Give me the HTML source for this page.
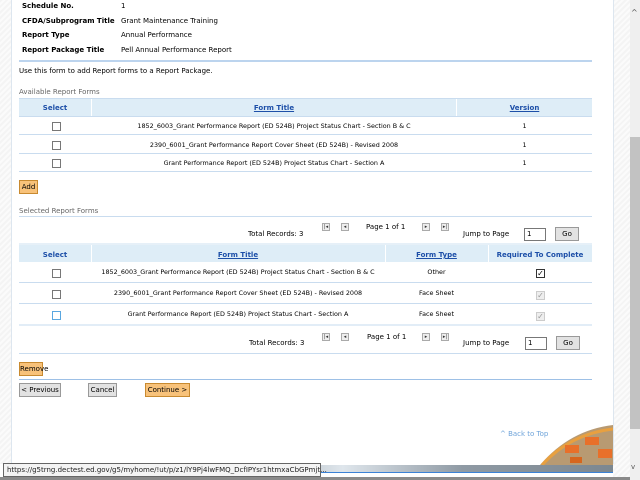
<!DOCTYPE html>
<html><head><meta charset="utf-8"><style>
*{margin:0;padding:0;box-sizing:border-box}
body{width:640px;height:480px;overflow:hidden;position:relative;background:#fff;font-family:"DejaVu Sans","Liberation Sans",sans-serif;font-size:7px;color:#000}
.a{position:absolute;white-space:nowrap;line-height:10px}
.b{font-weight:bold}
.t{font-size:6.4px}
.hatch{background:repeating-linear-gradient(135deg,#f4f4f4 0 2px,#fbfbfb 2px 4px)}
.line{position:absolute;height:1px;background:#c9dcef}
.hdr{position:absolute;background:#deedf7}
.hl{color:#1d4fa8;font-weight:bold}
.ul{text-decoration:underline}
.cb{position:absolute;width:9px;height:9px;border:1px solid #777;background:#fff}
.btn{position:absolute;border:1px solid #999;background:#e2e2e2;font-size:7px;line-height:12px;text-align:center}
.or{background:#f8c27a;border-color:#c88a30}
.pg{position:absolute;width:8px;height:8px;border:1px solid #aaa;background:#eee;font-size:5px;line-height:6px;text-align:center;color:#333}
.inp{position:absolute;border:1px solid #777;background:#fff;line-height:10px;padding-left:2px}
.c{text-align:center}
</style></head><body>
<div class="hatch" style="position:absolute;left:0;top:0;width:12px;height:464px"></div>
<div style="position:absolute;left:11px;top:0;width:1px;height:464px;background:#dde6ef"></div>
<div class="hatch" style="position:absolute;left:613px;top:0;width:17px;height:480px"></div>
<div style="position:absolute;left:613px;top:0;width:1px;height:464px;background:#dde6ef"></div>
<div style="position:absolute;left:630px;top:0;width:10px;height:480px;background:#efefef"></div>
<div style="position:absolute;left:630px;top:137px;width:10px;height:292px;background:#c2c2c2"></div>
<div class="a" style="left:631px;top:8px;font-size:8px;color:#555">^</div>
<div class="a" style="left:631px;top:462px;font-size:7px;color:#555">v</div>

<div class="a b" style="left:22px;top:1px">Schedule No.</div><div class="a" style="left:121px;top:1px">1</div>
<div class="a b" style="left:22px;top:16px">CFDA/Subprogram Title</div><div class="a" style="left:121px;top:16px">Grant Maintenance Training</div>
<div class="a b" style="left:22px;top:30px">Report Type</div><div class="a" style="left:121px;top:30px">Annual Performance</div>
<div class="a b" style="left:22px;top:45px">Report Package Title</div><div class="a" style="left:121px;top:45px">Pell Annual Performance Report</div>
<div class="line" style="left:19px;top:60px;width:573px;height:2px;background:#bcd4ee"></div>
<div class="a" style="left:19px;top:66px">Use this form to add Report forms to a Report Package.</div>
<div class="a" style="left:19px;top:87px;color:#666">Available Report Forms</div>

<div class="hdr" style="left:19px;top:98px;width:573px;height:18px;border-top:1px solid #c9dcef"></div>
<div style="position:absolute;left:91px;top:99px;width:1px;height:17px;background:#fff"></div>
<div style="position:absolute;left:456px;top:99px;width:1px;height:17px;background:#fff"></div>
<div class="a hl c" style="left:19px;top:103px;width:72px">Select</div>
<div class="a hl ul c" style="left:91px;top:103px;width:366px">Form Title</div>
<div class="a hl ul c" style="left:457px;top:103px;width:135px">Version</div>
<div class="line" style="left:19px;top:116px;width:573px"></div>
<div class="line" style="left:19px;top:134px;width:573px"></div>
<div class="line" style="left:19px;top:153px;width:573px"></div>
<div class="line" style="left:19px;top:171px;width:573px"></div>
<div class="cb" style="left:52px;top:122px"></div><div class="a c t" style="left:91px;top:121px;width:366px">1852_6003_Grant Performance Report (ED 524B) Project Status Chart - Section B &amp; C</div><div class="a c t" style="left:457px;top:121px;width:135px">1</div>
<div class="cb" style="left:52px;top:141px"></div><div class="a c t" style="left:91px;top:140px;width:366px">2390_6001_Grant Performance Report Cover Sheet (ED 524B) - Revised 2008</div><div class="a c t" style="left:457px;top:140px;width:135px">1</div>
<div class="cb" style="left:52px;top:159px"></div><div class="a c t" style="left:91px;top:158px;width:366px">Grant Performance Report (ED 524B) Project Status Chart - Section A</div><div class="a c t" style="left:457px;top:158px;width:135px">1</div>
<div class="btn or" style="left:19px;top:180px;width:19px;height:14px">Add</div>

<div class="a" style="left:19px;top:206px;color:#666">Selected Report Forms</div>
<div class="line" style="left:19px;top:216px;width:573px"></div>
<div class="a" style="left:248px;top:229px">Total Records: 3</div>
<div class="pg" style="left:322px;top:223px">|◂</div><div class="pg" style="left:341px;top:223px">◂</div>
<div class="a" style="left:366px;top:222px">Page 1 of 1</div>
<div class="pg" style="left:422px;top:223px">▸</div><div class="pg" style="left:441px;top:223px">▸|</div>
<div class="a" style="left:463px;top:229px">Jump to Page</div>
<div class="inp" style="left:524px;top:228px;width:22px;height:13px">1</div>
<div class="btn" style="left:555px;top:227px;width:24px;height:14px">Go</div>

<div class="hdr" style="left:19px;top:243px;width:573px;height:19px;border-top:2px solid #e6f0f8"></div>
<div style="position:absolute;left:91px;top:245px;width:1px;height:17px;background:#fff"></div>
<div style="position:absolute;left:385px;top:245px;width:1px;height:17px;background:#fff"></div>
<div style="position:absolute;left:488px;top:245px;width:1px;height:17px;background:#fff"></div>
<div class="a hl c" style="left:19px;top:250px;width:72px">Select</div>
<div class="a hl ul c" style="left:91px;top:250px;width:294px">Form Title</div>
<div class="a hl ul c" style="left:385px;top:250px;width:103px">Form Type</div>
<div class="a hl c" style="left:488px;top:250px;width:104px">Required To Complete</div>
<div class="line" style="left:19px;top:282px;width:573px"></div>
<div class="line" style="left:19px;top:303px;width:573px"></div>
<div class="line" style="left:19px;top:324px;width:573px;height:2px;background:#e2edf7"></div>
<div class="cb" style="left:52px;top:269px"></div><div class="a c t" style="left:91px;top:267px;width:294px">1852_6003_Grant Performance Report (ED 524B) Project Status Chart - Section B &amp; C</div><div class="a c t" style="left:385px;top:267px;width:103px">Other</div>
<div class="cb" style="left:536px;top:269px;font-size:8px;line-height:7px;text-align:center;border-color:#333">✓</div>
<div class="cb" style="left:52px;top:290px"></div><div class="a c t" style="left:91px;top:288px;width:294px">2390_6001_Grant Performance Report Cover Sheet (ED 524B) - Revised 2008</div><div class="a c t" style="left:385px;top:288px;width:103px">Face Sheet</div>
<div class="cb" style="left:536px;top:291px;font-size:8px;line-height:7px;text-align:center;border-color:#ccc;background:#eee;color:#999">✓</div>
<div class="cb" style="left:52px;top:311px;border-color:#5aa7e0"></div><div class="a c t" style="left:91px;top:309px;width:294px">Grant Performance Report (ED 524B) Project Status Chart - Section A</div><div class="a c t" style="left:385px;top:309px;width:103px">Face Sheet</div>
<div class="cb" style="left:536px;top:312px;font-size:8px;line-height:7px;text-align:center;border-color:#ccc;background:#eee;color:#999">✓</div>

<div class="a" style="left:249px;top:338px">Total Records: 3</div>
<div class="pg" style="left:322px;top:333px">|◂</div><div class="pg" style="left:341px;top:333px">◂</div>
<div class="a" style="left:367px;top:332px">Page 1 of 1</div>
<div class="pg" style="left:422px;top:333px">▸</div><div class="pg" style="left:441px;top:333px">▸|</div>
<div class="a" style="left:463px;top:338px">Jump to Page</div>
<div class="inp" style="left:525px;top:337px;width:22px;height:13px">1</div>
<div class="btn" style="left:556px;top:336px;width:24px;height:14px">Go</div>
<div class="line" style="left:19px;top:353px;width:573px"></div>
<div class="btn or" style="left:19px;top:362px;width:24px;height:14px">Remove</div>
<div class="line" style="left:19px;top:379px;width:573px;background:#9dc0e6"></div>
<div class="btn" style="left:19px;top:383px;width:42px;height:14px">&lt; Previous</div>
<div class="btn" style="left:88px;top:383px;width:29px;height:14px">Cancel</div>
<div class="btn or" style="left:145px;top:383px;width:45px;height:14px">Continue &gt;</div>
<div class="a" style="left:500px;top:429px;color:#6fa4da">^ Back to Top</div>

<svg style="position:absolute;left:540px;top:425px" width="73" height="40" viewBox="0 0 73 40">
<path d="M0 40 Q30 5 73 0 L73 40 Z" fill="#b89a72"/>
<path d="M2 40 Q30 9 73 4" stroke="#e8a040" stroke-width="3" fill="none"/>
<rect x="25" y="20" width="14" height="8" fill="#e8702a"/><rect x="45" y="12" width="14" height="8" fill="#e8702a"/><rect x="58" y="24" width="14" height="9" fill="#e8702a"/><rect x="30" y="32" width="12" height="6" fill="#d6661f"/>
</svg>
<div style="position:absolute;left:12px;top:465px;width:601px;height:7px;background:linear-gradient(90deg,#7f8a94,#a0aab2 40%,#dfe6ec 55%,#8f9aa4 75%,#7c8790)"></div>
<div style="position:absolute;left:12px;top:472px;width:601px;height:1px;background:#3b82d6"></div>
<div style="position:absolute;left:0;top:477px;width:630px;height:3px;background:#8a8a8a"></div>
<div class="a" style="left:3px;top:463px;width:318px;height:14px;border:1px solid #666;background:#f4f4f4;line-height:12px;padding-left:3px;font-size:7px;color:#222">https://g5trng.dectest.ed.gov/g5/myhome/!ut/p/z1/lY9Pj4lwFMQ_DcfIPYsr1htmxaCbGPmjt...</div>
</body></html>
